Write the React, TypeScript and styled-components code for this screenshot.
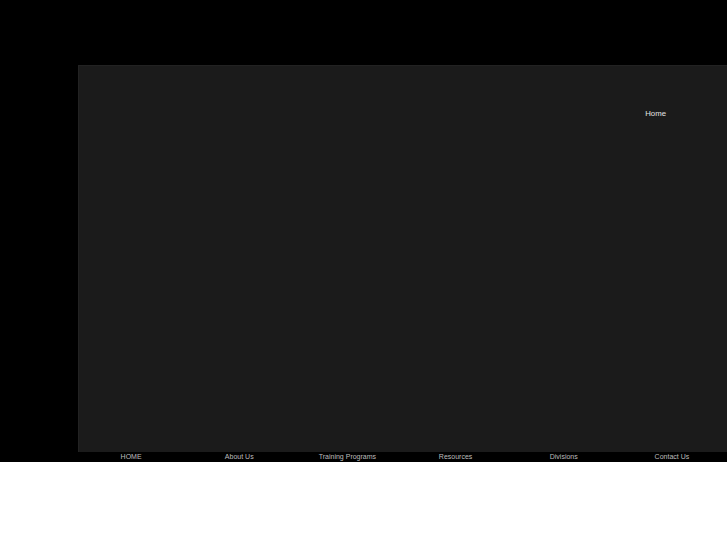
import * as React from "react";
import styled, { createGlobalStyle } from "styled-components";

const GlobalStyle = createGlobalStyle`
  html, body {
    margin: 0;
    padding: 0;
    background: #ffffff;
    overflow: hidden;
    font-family: "Liberation Sans", Arial, sans-serif;
  }
`;

const links = ["HOME", "About Us", "Training Programs", "Resources", "Divisions", "Contact Us"];

const App = () => {
  return (
    <>
      <GlobalStyle />
      <Page>
        <Wrapper>
          <Stage>
            <Crumb>
              <span>Home</span>
            </Crumb>
          </Stage>
          <NavBar>
            {links.map(link => (
              <NavItem key={link} href="#">{link}</NavItem>
            ))}
          </NavBar>
        </Wrapper>
      </Page>
    </>
  );
};

export default App;

const Page = styled.div`
  background: #000000;
  padding: 65px 0 0 78px;
  width: 727px;
  box-sizing: border-box;
  overflow: hidden;
`;

const Wrapper = styled.div`
  width: 651px;
  display: flex;
  flex-direction: column;
`;

const Stage = styled.div`
  height: 387px;
  box-sizing: border-box;
  background: #1b1b1b;
  border-top: 1px solid #222222;
  border-left: 1px solid #222222;
  display: flex;
  justify-content: flex-end;
  align-items: flex-start;
  padding: 42px 63px 0 0;
`;

const Crumb = styled.div`
  font-size: 7.8px;
  line-height: 11px;
  color: #e4e4e4;
`;

const NavBar = styled.nav`
  height: 10px;
  width: 649px;
  margin-left: -1px;
  display: grid;
  grid-template-columns: repeat(6, 1fr);
  background: #000000;
`;

const NavItem = styled.a`
  text-align: center;
  font-size: 7px;
  line-height: 10px;
  color: #bdbdbd;
  text-decoration: none;
  white-space: nowrap;
`;
